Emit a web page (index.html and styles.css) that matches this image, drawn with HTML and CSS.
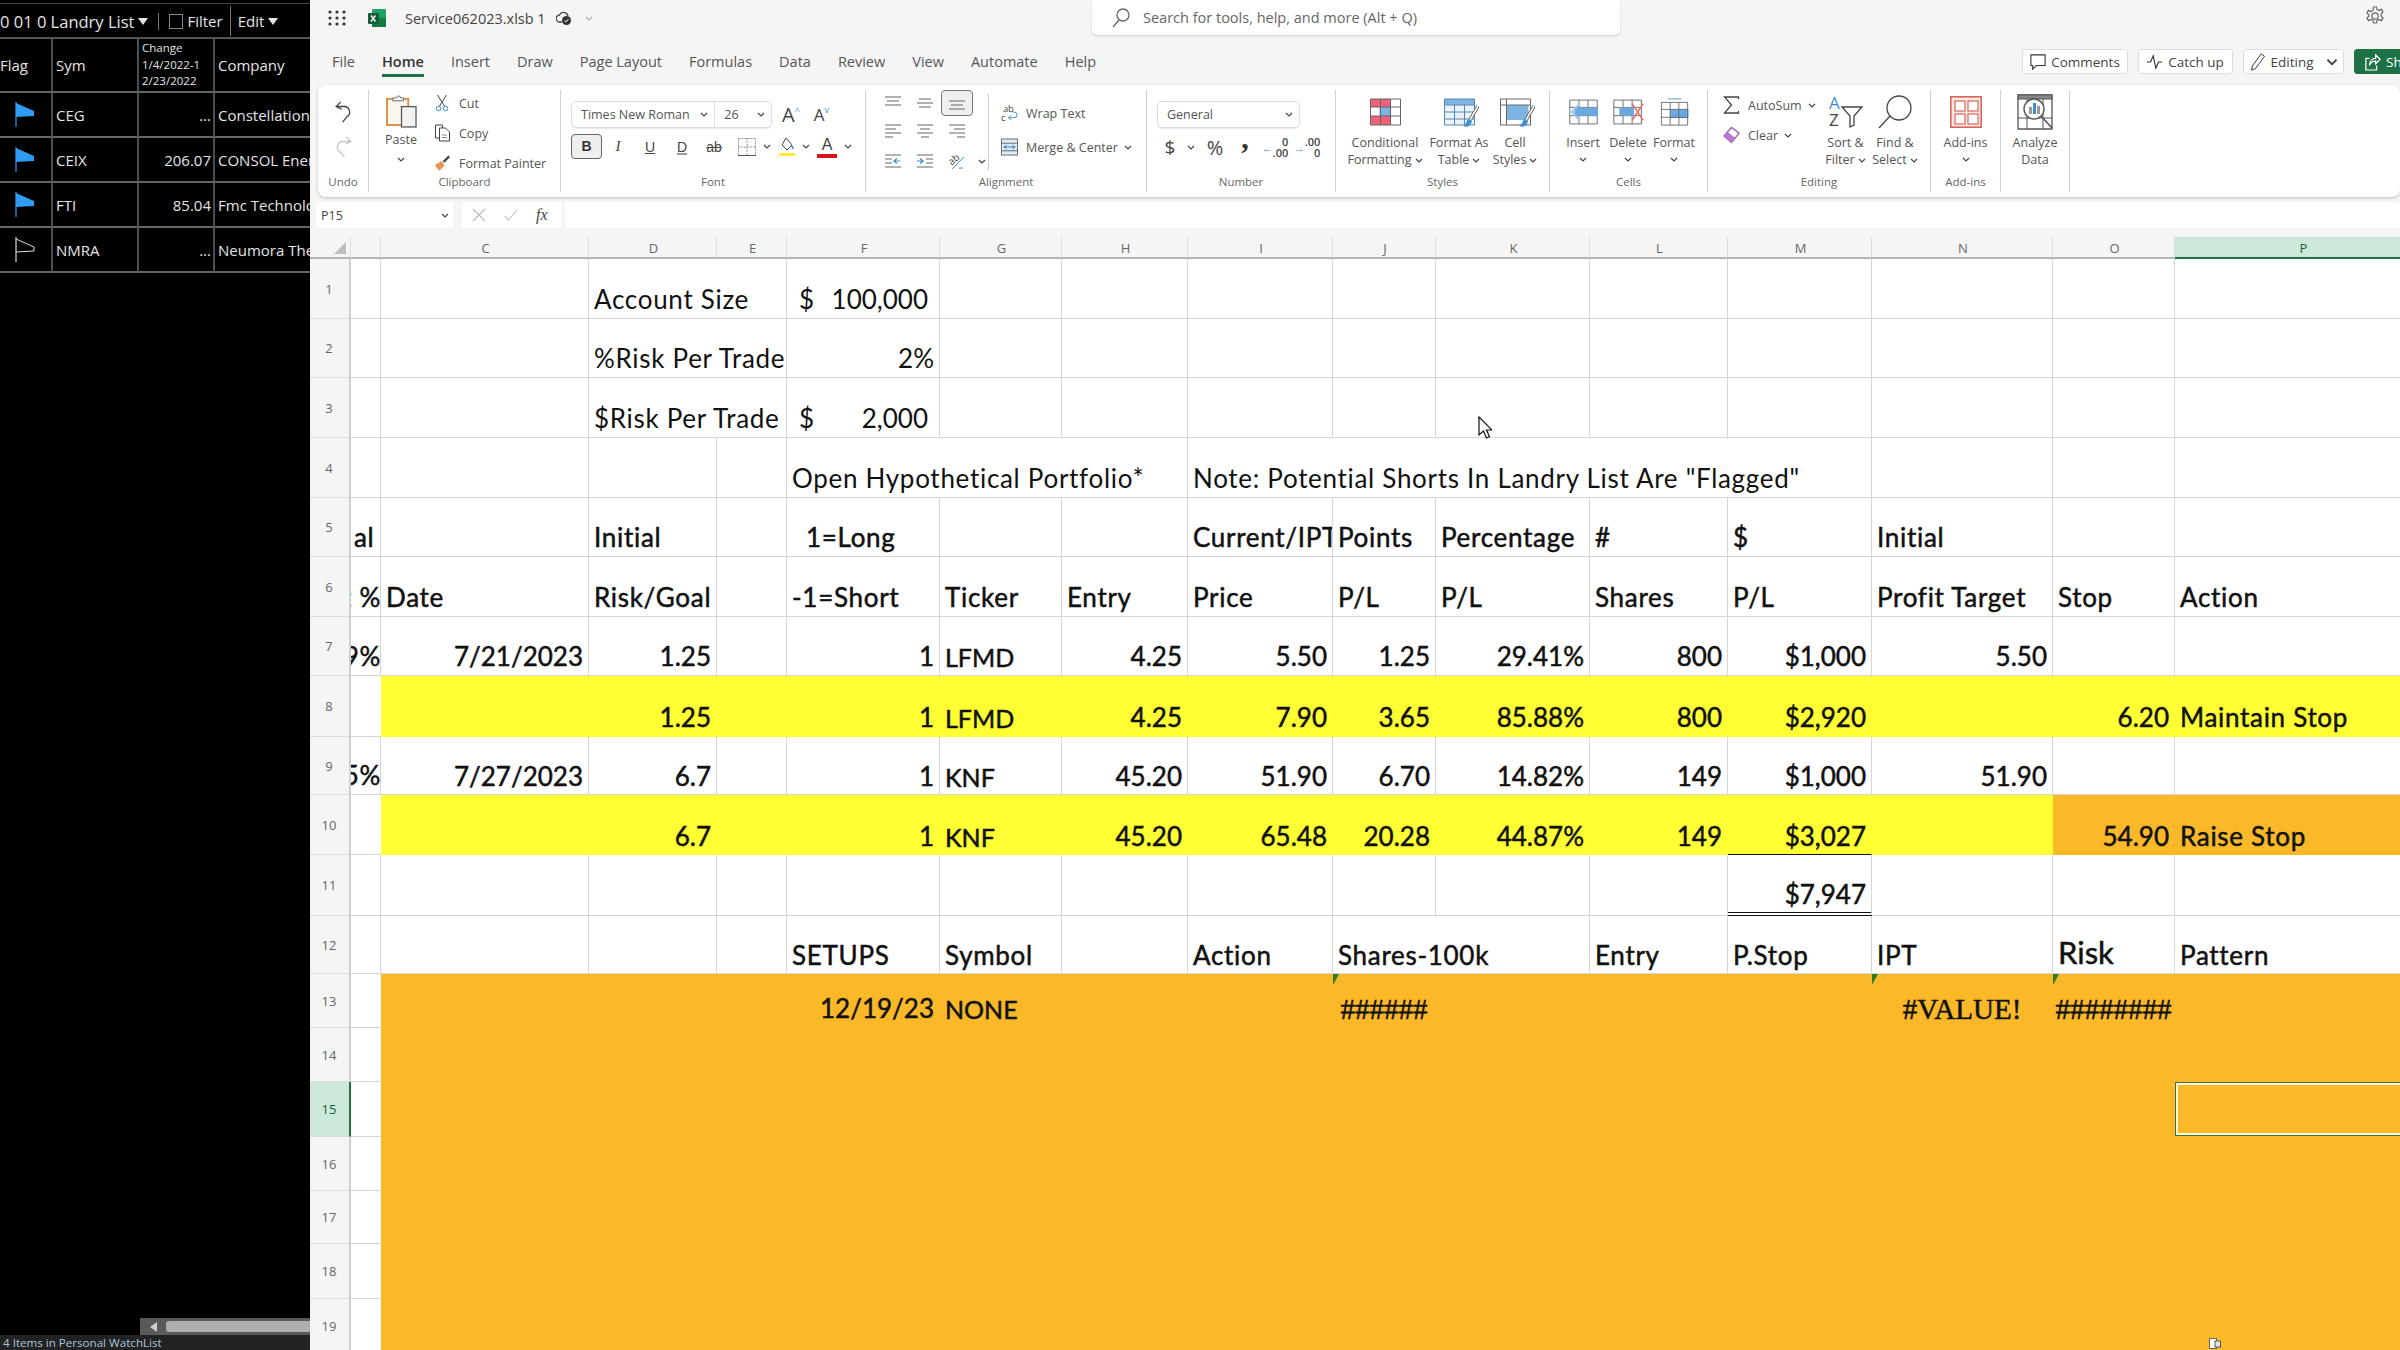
FILE: index.html
```html
<!DOCTYPE html>
<html>

<head>
    <title>Service062023.xlsb</title>
    <link rel="stylesheet" href="styles.css">
</head>

<body>
    <svg class="defs">
        <symbol id="chev" viewBox="0 0 8 5"><path d="M1 1l3 3 3-3" fill="none" stroke="#444" stroke-width="1.2"/></symbol>
        <symbol id="flag" viewBox="0 0 20 25"><path d="M1 0v25" stroke="currentColor" stroke-width="1.2"/><path d="M1 1l18 8v5L1 15z" fill="currentColor"/></symbol>
        <symbol id="flag-empty" viewBox="0 0 20 25"><path d="M1 0v25" stroke="#ddd" stroke-width="1.2"/><path d="M1 2l18 8v4L1 15" fill="none" stroke="#ddd"/></symbol>
        <symbol id="brush" viewBox="0 0 16 24"><path d="M15 1L7 15" stroke="#555" stroke-width="3.4"/><path d="M15 1L7 15" stroke="#fff" stroke-width="1.6"/><path d="M6 14c-3 1-2 5-6 7 4 2 8 0 9-5z" fill="#3f8fd2"/></symbol>
    </svg>

    <div class="watch">
        <div class="watch-bar">
            <span>0 01 0 Landry List</span><span class="tri"></span>
            <span class="bar-sep"></span><span class="box"></span><span class="dim">Filter</span>
            <span class="bar-sep small"></span><span class="dim">Edit</span><span class="tri"></span>
        </div>
        <div class="watch-list">
            <table class="watch-table">
                <colgroup><col class="w-flag"><col class="w-sym"><col class="w-chg"><col class="w-co"></colgroup>
                <tr class="watch-head">
                    <th>Flag</th>
                    <th>Sym</th>
                    <th class="chg-head">Change<br>1/4/2022-1<br>2/23/2022</th>
                    <th>Company</th>
                </tr>
                <tr><td><svg class="flag"><use href="#flag"/></svg></td><td>CEG</td><td class="num">...</td><td>Constellation Energy</td></tr>
                <tr><td><svg class="flag"><use href="#flag"/></svg></td><td>CEIX</td><td class="num">206.07</td><td>CONSOL Energy</td></tr>
                <tr><td><svg class="flag"><use href="#flag"/></svg></td><td>FTI</td><td class="num">85.04</td><td>Fmc Technologies</td></tr>
                <tr><td><svg class="flag"><use href="#flag-empty"/></svg></td><td>NMRA</td><td class="num">...</td><td>Neumora Therapeutics</td></tr>
            </table>
        </div>
        <div class="watch-scroll">
            <span class="scroll-left"></span>
            <span class="scroll-thumb"></span>
        </div>
        <div class="watch-status">4 Items in Personal WatchList</div>
    </div>

    <div class="excel">
        <div class="titlebar">
            <div class="title-left">
                <svg class="waffle" viewBox="0 0 18 16" fill="#333"><circle cx="2" cy="2" r="1.6"/><circle cx="9" cy="2" r="1.6"/><circle cx="16" cy="2" r="1.6"/><circle cx="2" cy="8" r="1.6"/><circle cx="9" cy="8" r="1.6"/><circle cx="16" cy="8" r="1.6"/><circle cx="2" cy="14" r="1.6"/><circle cx="9" cy="14" r="1.6"/><circle cx="16" cy="14" r="1.6"/></svg>
                <svg class="xl-logo" viewBox="0 0 18 18"><rect x="4" y="0" width="14" height="18" rx="1" fill="#21a366"/><rect x="4" y="9" width="14" height="9" fill="#107c41"/><rect x="0" y="4" width="11" height="11" rx="1" fill="#185c37"/><path d="M3 6.5l4.5 6M7.5 6.5L3 12.5" stroke="#fff" stroke-width="1.3"/></svg>
                <span class="doc-name">Service062023.xlsb 1</span>
                <svg class="sync" viewBox="0 0 16 16"><path d="M12 6a4.500 4.500 0 0 0-8.500-1A3.500 3.500 0 0 0 4 12h2" fill="none" stroke="#444" stroke-width="1.3"/><circle cx="10.500" cy="10.500" r="4.500" fill="#333"/><path d="M8.500 10.500l1.500 1.500 2.500-3" stroke="#fff" fill="none"/></svg>
                <svg class="chev pale"><use href="#chev"/></svg>
            </div>
            <div class="search">
                <svg class="search-icon" viewBox="0 0 18 20"><circle cx="11" cy="7" r="6" fill="none" stroke="#666" stroke-width="1.3"/><path d="M7 12l-6 7" stroke="#666" stroke-width="1.3"/></svg>
                <span>Search for tools, help, and more (Alt + Q)</span>
            </div>
            <svg class="gear" viewBox="0 0 20 20" fill="none" stroke="#666" stroke-width="1.2"><circle cx="10" cy="10" r="3.200"/><path d="M8.500 1h3l.5 2.600 2.200 1 2.300-1.200 1.500 2.600-1.800 1.800v2.400l1.800 1.800-1.500 2.600-2.300-1.200-2.200 1-.5 2.600h-3l-.5-2.600-2.200-1-2.300 1.200-1.500-2.600 1.800-1.800V8.800L2 7l1.500-2.600 2.300 1.200 2.200-1z"/></svg>
        </div>

        <div class="tabbar">
            <div class="tabs">
                <span>File</span>
                <span class="tab-on">Home</span>
                <span>Insert</span>
                <span>Draw</span>
                <span>Page Layout</span>
                <span>Formulas</span>
                <span>Data</span>
                <span>Review</span>
                <span>View</span>
                <span>Automate</span>
                <span>Help</span>
            </div>
            <div class="actions">
                <div class="action act-comments">
                    <svg class="act-icon" viewBox="0 0 18 18" fill="none" stroke="#333" stroke-width="1.2"><path d="M1 1h16v12H7l-4 4v-4H1z"/></svg>Comments
                </div>
                <div class="action act-catch">
                    <svg class="act-icon" viewBox="0 0 18 18" fill="none" stroke="#333" stroke-width="1.3"><path d="M0 9h4l3-7 3 14 3-7h4"/></svg>Catch up
                </div>
                <div class="action act-edit">
                    <svg class="act-icon" viewBox="0 0 18 22" fill="none" stroke="#333" stroke-width="1.2"><path d="M13 1l4 3L6 19l-5 2 1-5z"/></svg>Editing
                    <svg class="chev wide"><use href="#chev"/></svg>
                </div>
                <div class="action share">
                    <svg class="act-icon" viewBox="0 0 18 20" fill="none" stroke="#fff" stroke-width="1.4"><path d="M12 2l5 5-5 5V9C8 9 6 11 5 14c0-5 3-8 7-8zM13 14v5H1V6h4"/></svg>Share
                </div>
            </div>
        </div>

        <div class="ribbon">
            <div class="group g-undo">
                <div class="body undo-col">
                    <svg class="ico-undo" viewBox="0 0 18 24" fill="none" stroke="#444" stroke-width="1.4"><path d="M6 1L1 6l6 3M1 6h9a6 6 0 0 1 3 11l-5 6"/></svg>
                    <svg class="ico-undo" viewBox="0 0 18 24" fill="none" stroke="#c4c4c4" stroke-width="1.4"><path d="M12 1l5 5-6 3M17 6H8a6 6 0 0 0-3 11l5 6"/></svg>
                </div>
                <div class="label">Undo</div>
            </div>

            <div class="group g-clip">
                <div class="body">
                    <div class="paste">
                        <svg class="ico-paste" viewBox="0 0 32 36"><rect x="1" y="6" width="22" height="27" fill="#fdf6ee" stroke="#d9924a" stroke-width="2"/><path d="M7 8V5h4a2 2 0 0 1 4 0h3v3z" fill="#fff" stroke="#666"/><rect x="16" y="14" width="15" height="21" fill="#f2f2f2" stroke="#555" stroke-width="1.300"/></svg>
                        <span>Paste</span>
                        <svg class="chev"><use href="#chev"/></svg>
                    </div>
                    <div class="small-list">
                        <div class="small">
                            <svg class="ico-sm" viewBox="0 0 16 18" fill="none" stroke="#444"><path d="M3 1l7 11M12 1L5 12"/><circle cx="4" cy="14.500" r="2.300" stroke="#3f8fd2"/><circle cx="11" cy="14.500" r="2.300" stroke="#3f8fd2"/></svg>Cut
                        </div>
                        <div class="small">
                            <svg class="ico-sm" viewBox="0 0 16 18" fill="#fff" stroke="#444"><path d="M1 1h7v13H1z"/><path d="M5 4h6l4 4v9H5z"/><path d="M7.500 11h5M7.500 13.500h5" stroke="#888"/></svg>Copy
                        </div>
                        <div class="small">
                            <svg class="ico-sm" viewBox="0 0 18 18"><path d="M1 11l7-4 3 5-5 5c-1 0-4-4-5-6z" fill="#e9964c"/><path d="M10 8l6-6" stroke="#444" stroke-width="2.400"/></svg>Format Painter
                        </div>
                    </div>
                </div>
                <div class="label">Clipboard</div>
            </div>

            <div class="group g-font">
                <div class="body font-col">
                    <div class="font-top">
                        <div class="combo font-combo">
                            <span class="combo-name">Times New Roman<svg class="chev"><use href="#chev"/></svg></span>
                            <span class="combo-size">26<svg class="chev"><use href="#chev"/></svg></span>
                        </div>
                        <span class="grow">A<sup>^</sup></span>
                        <span class="shrink">A<sup>v</sup></span>
                    </div>
                    <div class="font-row">
                        <span class="tool-b">B</span>
                        <span class="tool t-i">I</span>
                        <span class="tool t-u">U</span>
                        <span class="tool t-d">D</span>
                        <span class="tool t-s">ab</span>
                        <svg class="ico-border" viewBox="0 0 18 18" fill="none" stroke="#999"><rect x=".5" y=".5" width="17" height="17" stroke-dasharray="2 1"/><path d="M9 0v18M0 9h18" stroke-dasharray="2 1"/><path d="M0 17.500h18" stroke="#555" stroke-dasharray="none"/></svg>
                        <svg class="chev"><use href="#chev"/></svg>
                        <svg class="ico-fill" viewBox="0 0 16 20"><path d="M7 1l6 7-5 5-5-5z" fill="#fff" stroke="#444"/><path d="M12 8c2 2 2 3 2 4" stroke="#3f8fd2" stroke-width="1.500"/><rect x="0" y="16" width="16" height="3" fill="#ffe93b"/></svg>
                        <svg class="chev"><use href="#chev"/></svg>
                        <span class="tool t-color">A</span>
                        <svg class="chev"><use href="#chev"/></svg>
                    </div>
                </div>
                <div class="label">Font</div>
            </div>

            <div class="group g-align">
                <div class="body">
                    <div class="align-grid">
                        <svg class="ico-lines" viewBox="0 0 16 14"><path d="M0 1h16M2 5h12M0 9h16"/></svg>
                        <svg class="ico-lines" viewBox="0 0 16 14"><path d="M2 3h12M0 7h16M2 11h12"/></svg>
                        <span class="align-on"><svg class="ico-lines" viewBox="0 0 16 14"><path d="M0 5h16M2 9h12M0 13h16"/></svg></span>
                        <span></span>
                        <svg class="ico-lines" viewBox="0 0 16 14"><path d="M0 1h16M0 5h11M0 9h16M0 13h8"/></svg>
                        <svg class="ico-lines" viewBox="0 0 16 14"><path d="M0 1h16M3 5h10M0 9h16M4 13h8"/></svg>
                        <svg class="ico-lines" viewBox="0 0 16 14"><path d="M0 1h16M5 5h11M0 9h16M8 13h8"/></svg>
                        <span></span>
                        <svg class="ico-lines" viewBox="0 0 16 14"><path d="M0 1h16M0 5h7M0 9h7M0 13h16"/><path class="blue" d="M15 7H9l3-2.500M9 7l3 2.500"/></svg>
                        <svg class="ico-lines" viewBox="0 0 16 14"><path d="M0 1h16M9 5h7M9 9h7M0 13h16"/><path class="blue" d="M0 7h6L3 4.500M6 7L3 9.500"/></svg>
                        <svg class="ico-orient" viewBox="0 0 18 18"><text x="1" y="11" transform="rotate(-40 6 9)">ab</text><path d="M4 17L16 5M11 16h4" stroke="#3f8fd2" fill="none"/></svg>
                        <svg class="chev"><use href="#chev"/></svg>
                    </div>
                    <span class="vsep"></span>
                    <div class="wrap-list">
                        <div class="small">
                            <svg class="ico-wrap" viewBox="0 0 18 18"><text x="2" y="8">ab</text><text x="0" y="17">c</text><path d="M8 14h6a3 3 0 0 0 0-6h-2M8 14l3-2.500M8 14l3 2.500" fill="none" stroke="#3f8fd2"/></svg>Wrap Text
                        </div>
                        <div class="small">
                            <svg class="ico-wrap" viewBox="0 0 18 18" fill="none" stroke="#666"><rect x=".5" y=".5" width="17" height="17" fill="#ddecf8"/><path d="M0 5h18M0 13h18"/><path d="M3 9h12M3 9l3-2M3 9l3 2M15 9l-3-2M15 9l-3 2" stroke="#2b7cc4"/></svg>Merge &amp; Center
                            <svg class="chev"><use href="#chev"/></svg>
                        </div>
                    </div>
                </div>
                <div class="label">Alignment</div>
            </div>

            <div class="group g-num">
                <div class="body num-col">
                    <div class="combo num-combo">General<svg class="chev"><use href="#chev"/></svg></div>
                    <div class="num-row">
                        <span class="n-dollar">$</span>
                        <svg class="chev n-chev"><use href="#chev"/></svg>
                        <span class="n-pct">%</span>
                        <span class="n-comma">,</span>
                        <span class="n-dec"><i>←</i><b>0<br>.00</b></span>
                        <span class="n-dec"><i>→</i><b>.00<br>0</b></span>
                    </div>
                </div>
                <div class="label">Number</div>
            </div>

            <div class="group g-styles">
                <div class="body">
                    <div class="big b-cf">
                        <div class="big-icon">
                            <svg class="ico-32" viewBox="0 0 32 28"><rect x="1" y="1" width="30" height="26" fill="#fff"/><rect x="1" y="1" width="20" height="8" fill="#f0607a"/><rect x="10" y="9" width="11" height="9" fill="#7eb4e2"/><rect x="1" y="18" width="20" height="9" fill="#f0607a"/><path d="M1 1h30v26H1zM11 1v26M21 1v26M1 9h30M1 18h30" fill="none" stroke="#666"/></svg>
                        </div>
                        <span>Conditional</span>
                        <span>Formatting<svg class="chev"><use href="#chev"/></svg></span>
                    </div>
                    <div class="big b-fat">
                        <div class="big-icon">
                            <span class="brushed">
                                <svg class="ico-32" viewBox="0 0 32 28"><rect x="1" y="1" width="30" height="6" fill="#7eb4e2"/><rect x="1" y="7" width="30" height="20" fill="#eaf2fa"/><path d="M1 1h30v26H1zM11 7v20M21 7v20M1 7h30M1 14h30M1 21h30" fill="none" stroke="#5a86ad"/></svg>
                                <svg class="over-brush"><use href="#brush"/></svg>
                            </span>
                        </div>
                        <span>Format As</span>
                        <span>Table<svg class="chev"><use href="#chev"/></svg></span>
                    </div>
                    <div class="big b-cs">
                        <div class="big-icon">
                            <span class="brushed">
                                <svg class="ico-32" viewBox="0 0 32 28"><rect x="7" y="7" width="22" height="15" fill="#7eb4e2"/><path d="M1 1h30v26H1zM7 1v26M1 7h30" fill="none" stroke="#666"/></svg>
                                <svg class="over-brush"><use href="#brush"/></svg>
                            </span>
                        </div>
                        <span>Cell</span>
                        <span>Styles<svg class="chev"><use href="#chev"/></svg></span>
                    </div>
                </div>
                <div class="label">Styles</div>
            </div>

            <div class="group g-cells">
                <div class="body">
                    <div class="big b-ins">
                        <div class="big-icon">
                            <svg class="ico-32" viewBox="0 0 36 28"><path d="M3 1h30v26H3zM13 1v26M23 1v26M3 9h30M3 18h30" fill="none" stroke="#666"/><rect x="8" y="9" width="26" height="9" fill="#6aaae0"/><path d="M14 5l-9 9 9 9" fill="none" stroke="#9cc8ee" stroke-width="2"/></svg>
                        </div>
                        <span>Insert</span>
                        <svg class="chev"><use href="#chev"/></svg>
                    </div>
                    <div class="big b-del">
                        <div class="big-icon">
                            <svg class="ico-32" viewBox="0 0 36 28"><path d="M2 1h30v26H2zM12 1v26M22 1v26M2 9h30M2 18h30" fill="none" stroke="#666"/><rect x="8" y="9" width="16" height="9" fill="#6aaae0"/><path d="M22 5l12 18M34 5L22 23" stroke="#ef6a6a" stroke-width="1.500"/></svg>
                        </div>
                        <span>Delete</span>
                        <svg class="chev"><use href="#chev"/></svg>
                    </div>
                    <div class="big b-fmt">
                        <div class="big-icon">
                            <svg class="ico-32" viewBox="0 0 32 32"><path d="M8 1h16" stroke="#4d8fc7"/><rect x="11" y="13" width="21" height="10" fill="#6aaae0"/><path d="M1 5h30v26H1zM11 5v26M21 5v26M1 13h30M1 22h30" fill="none" stroke="#666"/></svg>
                        </div>
                        <span>Format</span>
                        <svg class="chev"><use href="#chev"/></svg>
                    </div>
                </div>
                <div class="label">Cells</div>
            </div>

            <div class="group g-edit">
                <div class="body">
                    <div class="edit-list">
                        <div class="small">
                            <svg class="ico-sum" viewBox="0 0 16 18"><path d="M15 3V1H1l7 8-7 8h14v-2" fill="none" stroke="#444" stroke-width="1.300"/></svg>AutoSum
                            <svg class="chev"><use href="#chev"/></svg>
                        </div>
                        <div class="small">
                            <svg class="ico-sum" viewBox="0 0 18 18"><path d="M1 10l8-9 8 6-8 10z" fill="#fff" stroke="#9c5bb5" stroke-width="1.400"/><path d="M1 10l4-4 8 6-4 5z" fill="#b77bcb"/></svg>Clear
                            <svg class="chev"><use href="#chev"/></svg>
                        </div>
                    </div>
                    <div class="big b-sort">
                        <div class="big-icon">
                            <svg class="ico-sort" viewBox="0 0 34 34"><text class="az-a" x="0" y="14">A</text><text class="az-z" x="0" y="31">Z</text><path d="M13 12h20l-8 9v9l-4 2V21z" fill="none" stroke="#444" stroke-width="1.300"/></svg>
                        </div>
                        <span>Sort &amp;</span>
                        <span>Filter<svg class="chev"><use href="#chev"/></svg></span>
                    </div>
                    <div class="big b-find">
                        <div class="big-icon">
                            <svg class="ico-sort" viewBox="0 0 34 34" fill="none" stroke="#444" stroke-width="1.300"><circle cx="21" cy="13" r="12"/><path d="M12 21L1 33"/></svg>
                        </div>
                        <span>Find &amp;</span>
                        <span>Select<svg class="chev"><use href="#chev"/></svg></span>
                    </div>
                </div>
                <div class="label">Editing</div>
            </div>

            <div class="group g-addin">
                <div class="body">
                    <div class="big b-full">
                        <div class="big-icon">
                            <svg class="ico-addin" viewBox="0 0 32 32" fill="#fff" stroke="#d9655a" stroke-width="1.200"><rect x=".8" y=".8" width="30.400" height="30.400" fill="#fbe9e7" stroke-width="1.600"/><rect x="5" y="5" width="10" height="10"/><rect x="18" y="5" width="10" height="10"/><rect x="5" y="18" width="10" height="10"/><rect x="18" y="18" width="10" height="10"/></svg>
                        </div>
                        <span>Add-ins</span>
                        <svg class="chev"><use href="#chev"/></svg>
                    </div>
                </div>
                <div class="label">Add-ins</div>
            </div>

            <div class="group g-analyze">
                <div class="body">
                    <div class="big b-full">
                        <div class="big-icon">
                            <svg class="ico-analyze" viewBox="0 0 36 36" fill="none" stroke="#555"><path d="M1 1h34v34H1z" stroke-width="1.300"/><rect x="1" y="1" width="34" height="4" fill="#888"/><path d="M1 24h34M10 5v30M26 5v30"/><circle cx="17" cy="15" r="10" fill="#fff" stroke-width="1.400"/><rect x="12" y="13" width="3" height="7" fill="#999" stroke="none"/><rect x="16" y="9" width="3" height="11" fill="#3f8fd2" stroke="none"/><rect x="20" y="12" width="3" height="8" fill="#999" stroke="none"/><path d="M24 22l11 12" stroke-width="1.600"/></svg>
                        </div>
                        <span>Analyze</span>
                        <span>Data</span>
                    </div>
                </div>
            </div>
        </div>

        <div class="formula">
            <div class="name-box">P15<svg class="chev"><use href="#chev"/></svg></div>
            <div class="fx-box">
                <svg class="fx-mark" viewBox="0 0 14 14"><path d="M1 1l12 12M13 1L1 13" stroke="#bbb" stroke-width="1.200"/></svg>
                <svg class="fx-mark" viewBox="0 0 16 14"><path d="M1 8l4 5L15 1" fill="none" stroke="#bbb" stroke-width="1.200"/></svg>
                <span class="fx">fx</span>
            </div>
            <div class="fx-input"></div>
        </div>

        <table class="sheet">
            <colgroup>
                <col class="c-rh"><col class="c-b"><col class="c-c"><col class="c-d"><col class="c-e"><col class="c-f"><col class="c-g"><col class="c-h">
                <col class="c-i"><col class="c-j"><col class="c-k"><col class="c-l"><col class="c-m"><col class="c-n"><col class="c-o"><col class="c-p">
            </colgroup>
            <tr class="cols">
                <th class="corner"><span class="corner-tri"></span></th>
                <th></th><th>C</th><th>D</th><th>E</th><th>F</th><th>G</th><th>H</th><th>I</th><th>J</th><th>K</th><th>L</th><th>M</th><th>N</th><th>O</th><th class="col-on">P</th>
            </tr>
            <tr class="h60 plain">
                <th class="rh">1</th><td></td><td></td><td colspan="2">Account Size</td>
                <td><div class="acct"><span>$</span><span>100,000</span></div></td>
                <td></td><td></td><td></td><td></td><td></td><td></td><td></td><td></td><td></td><td></td>
            </tr>
            <tr class="h59 plain">
                <th class="rh">2</th><td></td><td></td><td colspan="2">%Risk Per Trade</td>
                <td class="r">2%</td>
                <td></td><td></td><td></td><td></td><td></td><td></td><td></td><td></td><td></td><td></td>
            </tr>
            <tr class="h60 plain">
                <th class="rh">3</th><td></td><td></td><td colspan="2">$Risk Per Trade</td>
                <td><div class="acct"><span>$</span><span>2,000</span></div></td>
                <td></td><td></td><td></td><td></td><td></td><td></td><td></td><td></td><td></td><td></td>
            </tr>
            <tr class="h60 plain">
                <th class="rh">4</th><td></td><td></td><td></td><td></td>
                <td colspan="3">Open Hypothetical Portfolio*</td>
                <td colspan="5">Note: Potential Shorts In Landry List Are "Flagged"</td>
                <td></td><td></td><td></td>
            </tr>
            <tr class="h59 strong">
                <th class="rh">5</th><td class="cut">al</td><td></td><td>Initial</td><td></td><td class="indent">1=Long</td><td></td><td></td><td>Current/IPT</td><td>Points</td><td>Percentage</td><td>#</td><td>$</td><td>Initial</td><td></td><td></td>
            </tr>
            <tr class="h60 strong">
                <th class="rh">6</th><td class="clip"><span>t %</span></td><td>Date</td><td>Risk/Goal</td><td></td><td>-1=Short</td><td>Ticker</td><td>Entry</td><td>Price</td><td>P/L</td><td>P/L</td><td>Shares</td><td>P/L</td><td>Profit Target</td><td>Stop</td><td>Action</td>
            </tr>
            <tr class="h59 strong">
                <th class="rh">7</th><td class="clip"><span>19%</span></td><td class="r">7/21/2023</td><td class="r">1.25</td><td></td><td class="r">1</td><td class="tk">LFMD</td><td class="r">4.25</td><td class="r">5.50</td><td class="r">1.25</td><td class="r">29.41%</td><td class="r">800</td><td class="r">$1,000</td><td class="r">5.50</td><td></td><td></td>
            </tr>
            <tr class="h61 strong yellow">
                <th class="rh">8</th><td class="white"></td><td></td><td class="r">1.25</td><td></td><td class="r">1</td><td class="tk">LFMD</td><td class="r">4.25</td><td class="r">7.90</td><td class="r">3.65</td><td class="r">85.88%</td><td class="r">800</td><td class="r">$2,920</td><td></td><td class="r">6.20</td><td>Maintain Stop</td>
            </tr>
            <tr class="h58 strong low">
                <th class="rh">9</th><td class="clip"><span>15%</span></td><td class="r">7/27/2023</td><td class="r">6.7</td><td></td><td class="r">1</td><td class="tk">KNF</td><td class="r">45.20</td><td class="r">51.90</td><td class="r">6.70</td><td class="r">14.82%</td><td class="r">149</td><td class="r">$1,000</td><td class="r">51.90</td><td></td><td></td>
            </tr>
            <tr class="h60 strong yellow low">
                <th class="rh">10</th><td class="white"></td><td></td><td class="r">6.7</td><td></td><td class="r">1</td><td class="tk">KNF</td><td class="r">45.20</td><td class="r">65.48</td><td class="r">20.28</td><td class="r">44.87%</td><td class="r">149</td><td class="r line-under">$3,027</td><td></td><td class="r amber">54.90</td><td class="amber">Raise Stop</td>
            </tr>
            <tr class="h61 strong">
                <th class="rh">11</th><td></td><td></td><td></td><td></td><td></td><td></td><td></td><td></td><td></td><td></td><td></td><td class="r total">$7,947</td><td></td><td></td><td></td>
            </tr>
            <tr class="h58 strong low">
                <th class="rh">12</th><td></td><td></td><td></td><td></td><td>SETUPS</td><td>Symbol</td><td></td><td>Action</td><td colspan="2">Shares-100k</td><td>Entry</td><td>P.Stop</td><td>IPT</td><td class="risk">Risk</td><td>Pattern</td>
            </tr>
            <tr class="h54 strong fill">
                <th class="rh">13</th><td class="white"></td><td></td><td></td><td></td><td class="r">12/19/23</td><td class="tk">NONE</td><td></td><td></td><td class="err note c">######</td><td></td><td></td><td></td><td class="err note c">#VALUE!</td><td class="err note c">########</td><td></td>
            </tr>
            <tr class="h54 fill"><th class="rh">14</th><td class="white"></td><td colspan="14"></td></tr>
            <tr class="h55 fill"><th class="rh row-on">15</th><td class="white"></td><td colspan="13"></td><td class="selected"></td></tr>
            <tr class="h54 fill"><th class="rh">16</th><td class="white"></td><td colspan="14"></td></tr>
            <tr class="h53 fill"><th class="rh">17</th><td class="white"></td><td colspan="14"></td></tr>
            <tr class="h55 fill"><th class="rh">18</th><td class="white"></td><td colspan="14"></td></tr>
            <tr class="h54 fill"><th class="rh">19</th><td class="white"></td><td colspan="14"></td></tr>
        </table>

        <svg class="paste-tag" viewBox="0 0 12 12"><rect x=".5" y="1.500" width="7" height="10" fill="#fff" stroke="#666"/><rect x="6" y="4" width="5.500" height="6" fill="#dfe8f2" stroke="#555"/></svg>
        <svg class="pointer" viewBox="0 0 14 24"><path d="M1 1v18l4.500-4 3 7 3-1.300-3-6.700H14z" fill="#fff" stroke="#111" stroke-width="1.200"/></svg>
    </div>
</body>

</html>
```

FILE: styles.css
```css
* {
    box-sizing: border-box;
    margin: 0;
}

html,
body {
    height: 1350px;
    overflow: hidden;
}

body {
    display: flex;
    width: 2400px;
    font-family: "Open Sans", sans-serif;
    background: #000;
}

.defs {
    display: none;
}

.chev {
    width: 8px;
    height: 5px;
    flex: none;
}

.chev.pale {
    opacity: .4;
}

.chev.wide {
    width: 12px;
    height: 8px;
    margin-left: 7px;
}

/* watch list on the left */
.watch {
    width: 310px;
    flex: none;
    display: flex;
    flex-direction: column;
    overflow: hidden;
    background: #000;
    color: #e4e4e4;
}

.watch-bar {
    height: 34px;
    display: flex;
    align-items: center;
    gap: 4px;
    margin-top: 3px;
    padding-top: 1px;
    border-top: 1px solid #444;
    font-size: 16.500px;
    white-space: nowrap;
}

.tri {
    border-left: 5px solid transparent;
    border-right: 5px solid transparent;
    border-top: 7px solid #e4e4e4;
}

.bar-sep {
    width: 1px;
    height: 17px;
    background: #777;
    margin: 0 6px;
}

.bar-sep.small {
    margin: 0 3px;
}

.box {
    width: 14px;
    height: 15px;
    border: 1px solid #888;
}

.dim {
    font-size: 15px;
}

.watch-list {
    flex: 1;
}

.watch-table {
    table-layout: fixed;
    width: 310px;
    border-collapse: separate;
    border-spacing: 0;
    font-size: 15px;
    border-top: 2px solid #555;
}

.w-flag {
    width: 53px;
}

.w-sym {
    width: 86px;
}

.w-chg {
    width: 76px;
}

.w-co {
    width: 95px;
}

.watch-table th,
.watch-table td {
    padding: 0 2px 0 3px;
    text-align: left;
    font-weight: 400;
    overflow: hidden;
    white-space: nowrap;
    border-right: 2px solid #4d4d4d;
    border-bottom: 2px solid #666;
}

.watch-table tr > :last-child {
    border-right: 0;
}

.watch-table th:first-child {
    padding-left: 0;
}

.watch-table tr {
    height: 45px;
}

.watch-table .watch-head {
    height: 54px;
}

.watch-table .chg-head {
    font-size: 11.500px;
    line-height: 16.500px;
}

.watch-table .num {
    text-align: right;
}

.flag {
    display: block;
    width: 20px;
    height: 25px;
    margin-left: 12px;
    color: #2f9bf3;
}

.watch-scroll {
    height: 17px;
    width: 170px;
    margin-left: auto;
    display: flex;
    align-items: center;
    background: #5a5a5a;
}

.scroll-left {
    width: 0;
    height: 0;
    margin: 0 9px 0 10px;
    border-top: 5px solid transparent;
    border-bottom: 5px solid transparent;
    border-right: 7px solid #ccc;
}

.scroll-thumb {
    flex: 1;
    height: 11px;
    border-radius: 3px 0 0 3px;
    background: #aeaeae;
}

.watch-status {
    height: 15px;
    padding-left: 3px;
    background: #222;
    color: #a9c4dc;
    font-size: 11.600px;
    line-height: 16px;
    white-space: nowrap;
}

/* excel */
.excel {
    position: relative;
    width: 2090px;
    flex: none;
    overflow: hidden;
    background: #f5f5f5;
    color: #444;
}

.titlebar {
    height: 37px;
    display: flex;
}

.title-left {
    width: 782px;
    display: flex;
    align-items: center;
    padding-left: 18px;
    padding-bottom: 1px;
}

.waffle {
    width: 18px;
    height: 16px;
}

.xl-logo {
    width: 18px;
    height: 18px;
    margin-left: 22px;
}

.doc-name {
    margin-left: 19px;
    font-size: 14.500px;
    color: #444;
}

.sync {
    width: 16px;
    height: 16px;
    margin: 0 13px 0 10px;
}

.search {
    width: 528px;
    height: 35px;
    display: flex;
    align-items: center;
    padding-left: 20px;
    background: #fff;
    border-radius: 0 0 5px 5px;
    box-shadow: 0 1px 2px #ccc;
    font-size: 14.500px;
    color: #666;
}

.search-icon {
    width: 18px;
    height: 20px;
    margin-right: 13px;
}

.gear {
    width: 20px;
    height: 20px;
    margin: 6px 0 0 745px;
}

.tabbar {
    height: 48px;
    display: flex;
}

.tabs {
    width: 1712px;
    flex: none;
    display: flex;
    gap: 27px;
    padding: 16px 0 0 22px;
    font-size: 14.500px;
    color: #555;
}

.tabs span {
    height: 24px;
    line-height: 18px;
}

.tabs .tab-on {
    font-weight: 600;
    color: #333;
    border-bottom: 3px solid #217346;
}

.actions {
    display: flex;
    gap: 10px;
    padding-top: 12px;
    font-size: 13.500px;
    color: #444;
}

.action {
    height: 25px;
    flex: none;
    display: flex;
    align-items: center;
    justify-content: center;
    gap: 5px;
    background: #fff;
    border: 1px solid #ddd;
    border-radius: 3px;
    white-space: nowrap;
}

.act-comments {
    width: 106px;
}

.act-catch {
    width: 95px;
}

.act-edit {
    width: 101px;
}

.action.share {
    width: 90px;
    justify-content: flex-start;
    padding-left: 10px;
    background: #1e7145;
    border-color: #1e7145;
    color: #fff;
}

.act-icon {
    width: 16px;
    height: 18px;
}

/* ribbon */
.ribbon {
    height: 112px;
    margin-left: 8px;
    display: flex;
    padding: 5px 0;
    background: #fff;
    border-radius: 8px;
    box-shadow: 0 1px 3px #bbb;
    font-size: 12.500px;
    color: #555;
}

.group {
    height: 102px;
    flex: none;
    border-right: 1px solid #d0d0d0;
    white-space: nowrap;
}

.body {
    height: 80px;
    display: flex;
}

.label {
    height: 22px;
    padding-top: 4px;
    text-align: center;
    font-size: 11.500px;
    color: #666;
}

.g-undo {
    width: 51px;
}

.g-clip {
    width: 192px;
}

.g-font {
    width: 305px;
}

.g-align {
    width: 281px;
}

.g-num {
    width: 189px;
}

.g-styles {
    width: 214px;
}

.g-cells {
    width: 158px;
}

.g-edit {
    width: 223px;
}

.g-addin {
    width: 70px;
}

.g-analyze {
    width: 69px;
}

.undo-col {
    flex-direction: column;
    align-items: center;
    gap: 13px;
    padding-top: 11px;
}

.ico-undo {
    width: 17px;
    height: 22px;
}

.paste {
    width: 64px;
    display: flex;
    flex-direction: column;
    align-items: center;
}

.ico-paste {
    width: 31px;
    height: 35px;
    margin: 3px 0 3px;
}

.paste .chev {
    margin-top: 9px;
}

.small-list {
    margin: -2px 0 0 1px;
}

.small {
    height: 30px;
    display: flex;
    align-items: center;
}

.small .chev {
    margin-left: 6px;
}

.ico-sm {
    width: 17px;
    height: 18px;
    margin-right: 8px;
}

.font-col {
    flex-direction: column;
    padding: 11px 0 0 10px;
}

.font-top {
    display: flex;
    align-items: center;
    height: 27px;
}

.combo {
    height: 27px;
    display: flex;
    align-items: center;
    border: 1px solid #dcdcdc;
    border-radius: 5px;
    box-shadow: 0 1px 1px #e8e8e8;
}

.font-combo {
    width: 201px;
}

.combo-name {
    width: 144px;
    height: 25px;
    display: flex;
    align-items: center;
    justify-content: space-between;
    padding: 0 6px 0 9px;
    border-right: 1px solid #dcdcdc;
}

.combo-size {
    width: 56px;
    display: flex;
    align-items: center;
    justify-content: space-between;
    padding: 0 6px 0 9px;
}

.grow {
    margin-left: 10px;
    font-size: 20px;
    color: #444;
}

.shrink {
    margin-left: 14px;
    font-size: 17px;
    color: #444;
}

.grow sup,
.shrink sup {
    font-size: 9px;
    color: #3f8fd2;
    vertical-align: 8px;
}

.font-row {
    display: flex;
    align-items: center;
    height: 25px;
    margin-top: 6px;
}

.tool-b {
    width: 31px;
    height: 25px;
    text-align: center;
    line-height: 23px;
    font-family: "Liberation Sans", sans-serif;
    font-size: 14px;
    font-weight: 700;
    background: #efefef;
    border: 1px solid #666;
    border-radius: 4px;
    color: #333;
}

.tool {
    width: 32px;
    text-align: center;
    font-size: 14px;
    font-family: "Liberation Sans", sans-serif;
    color: #444;
}

.t-i {
    font-style: italic;
    font-family: "Liberation Serif", serif;
    font-size: 15px;
}

.t-u {
    text-decoration: underline;
}

.t-d {
    text-decoration: underline;
    text-decoration-color: #999;
    text-decoration-thickness: 2px;
}

.t-s {
    text-decoration: line-through;
}

.ico-border {
    width: 18px;
    height: 18px;
    margin-left: 8px;
}

.font-row .chev {
    margin: 0 6px 0 7px;
}

.ico-fill {
    width: 16px;
    height: 20px;
    margin-left: 2px;
}

.t-color {
    width: 20px;
    height: 22px;
    margin-left: 1px;
    line-height: 18px;
    font-size: 16px;
    border-bottom: 4px solid #d8131b;
}

.align-grid {
    display: grid;
    grid-template-columns: 32px 32px 32px 18px;
    grid-template-rows: 26px 30px 30px;
    align-items: center;
    justify-items: center;
    margin-left: 11px;
}

.ico-lines {
    width: 16px;
    height: 14px;
    fill: none;
    stroke: #666;
    stroke-width: 1.200;
}

.ico-lines .blue {
    stroke: #3f8fd2;
}

.align-on {
    width: 32px;
    height: 26px;
    display: flex;
    align-items: center;
    justify-content: center;
    background: #efefef;
    border: 1px solid #777;
    border-radius: 4px;
}

.ico-orient {
    width: 18px;
    height: 18px;
    font-size: 10px;
    fill: #444;
}

.vsep {
    width: 1px;
    height: 76px;
    margin: 4px 0 0 -3px;
    background: #d0d0d0;
}

.wrap-list {
    margin: 6px 0 0 12px;
}

.wrap-list .small {
    height: 34px;
}

.ico-wrap {
    width: 17px;
    height: 18px;
    margin-right: 8px;
    font-size: 10px;
    fill: #444;
}

.num-col {
    flex-direction: column;
    padding: 11px 0 0 10px;
}

.num-combo {
    width: 143px;
    justify-content: space-between;
    padding: 0 6px 0 9px;
}

.num-row {
    display: flex;
    align-items: center;
    height: 26px;
    margin-top: 6px;
    color: #444;
}

.n-dollar {
    width: 26px;
    text-align: center;
    font-size: 19px;
}

.n-chev {
    margin: 0 4px;
}

.n-pct {
    width: 32px;
    text-align: center;
    font-size: 20px;
}

.n-comma {
    width: 28px;
    height: 26px;
    text-align: center;
    font-family: "Liberation Serif", serif;
    font-size: 30px;
    font-weight: 700;
    line-height: 8px;
    color: #333;
}

.n-dec {
    width: 32px;
    display: flex;
    align-items: center;
    justify-content: center;
    font-size: 11px;
    line-height: 11px;
}

.n-dec i {
    font-style: normal;
    color: #3f8fd2;
    font-size: 11px;
}

.n-dec b {
    font-weight: 600;
    text-align: right;
}

.big {
    display: flex;
    flex-direction: column;
    align-items: center;
    line-height: 17px;
    flex: none;
}

.big > .chev {
    margin-top: 6px;
}

.big span .chev {
    margin-left: 3px;
    vertical-align: 1px;
}

.big-icon {
    height: 44px;
    display: flex;
    align-items: center;
    justify-content: center;
}

.ico-32 {
    width: 33px;
    height: 28px;
    display: block;
}

.brushed {
    position: relative;
    display: block;
}

.over-brush {
    position: absolute;
    right: -3px;
    top: 7px;
    width: 16px;
    height: 24px;
}

.b-cf {
    width: 86px;
    margin-left: 6px;
}

.b-fat {
    width: 62px;
}

.b-cs {
    width: 50px;
}

.b-ins {
    width: 46px;
    margin-left: 10px;
}

.b-del {
    width: 44px;
}

.b-fmt {
    width: 48px;
}

.edit-list {
    width: 100px;
    margin-left: 15px;
}

.ico-sum {
    width: 17px;
    height: 18px;
    margin-right: 8px;
}

.b-sort {
    width: 45px;
}

.b-find {
    width: 54px;
}

.ico-sort {
    width: 34px;
    height: 34px;
}

.az-a {
    fill: #3f8fd2;
    font-size: 17px;
}

.az-z {
    fill: #444;
    font-size: 17px;
}

.b-full {
    width: 100%;
}

.ico-addin {
    width: 32px;
    height: 32px;
}

.ico-analyze {
    width: 36px;
    height: 36px;
}

/* formula bar */
.formula {
    height: 26px;
    display: flex;
    gap: 9px;
    margin: 5px 0 9px 6px;
}

.formula > div {
    height: 26px;
    background: #fff;
}

.name-box {
    width: 137px;
    display: flex;
    align-items: center;
    justify-content: space-between;
    padding: 0 4px 0 5px;
    font-size: 12.500px;
}

.fx-box {
    width: 99px;
    display: flex;
    align-items: center;
    gap: 18px;
    padding-left: 10px;
}

.fx-mark {
    width: 14px;
    height: 14px;
}

.fx {
    font-family: "Liberation Serif", serif;
    font-style: italic;
    font-size: 16px;
    color: #444;
}

.fx-input {
    flex: 1;
    margin-left: -5px;
}

/* sheet */
.sheet {
    table-layout: fixed;
    width: 2120px;
    border-collapse: separate;
    border-spacing: 0;
    background: #fff;
    font-family: Lato, sans-serif;
    font-size: 26px;
    letter-spacing: .7px;
    color: #111;
}

.c-rh {
    width: 41px;
}

.c-b {
    width: 30px;
}

.c-c {
    width: 208px;
}

.c-d {
    width: 128px;
}

.c-e {
    width: 70px;
}

.c-f {
    width: 153px;
}

.c-g {
    width: 122px;
}

.c-h {
    width: 126px;
}

.c-i {
    width: 145px;
}

.c-j {
    width: 103px;
}

.c-k {
    width: 154px;
}

.c-l {
    width: 138px;
}

.c-m {
    width: 144px;
}

.c-n {
    width: 181px;
}

.c-o {
    width: 122px;
}

.c-p {
    width: 255px;
}

.cols {
    height: 21px;
}

.cols th {
    padding: 2px 0 0 2px;
    background: #f5f5f5;
    border-right: 1px solid #dcdcdc;
    border-bottom: 2px solid #b5b5b5;
    font-family: "Open Sans", sans-serif;
    font-size: 13px;
    font-weight: 400;
    letter-spacing: 0;
    color: #666;
}

.cols .col-on {
    background: #cce8d8;
    color: #1b5e3a;
    border-right: 0;
    border-bottom-color: #217346;
}

.cols .corner {
    position: relative;
}

.corner-tri {
    position: absolute;
    right: 4px;
    bottom: 3px;
    border-left: 12px solid transparent;
    border-bottom: 12px solid #bdbdbd;
}

.h53 {
    height: 53px;
}

.h54 {
    height: 54px;
}

.h55 {
    height: 55px;
}

.h58 {
    height: 58px;
}

.h59 {
    height: 59px;
}

.h60 {
    height: 60px;
}

.h61 {
    height: 61px;
}

.sheet td {
    position: relative;
    padding: 0 5px 3px;
    vertical-align: bottom;
    white-space: nowrap;
    overflow: hidden;
    border-right: 1px solid #d6d6d6;
    border-bottom: 1px solid #d6d6d6;
}

.sheet .low td {
    padding-bottom: 2px;
}

.sheet .rh {
    padding: 0 1px 0 0;
    background: #f5f5f5;
    border-right: 2px solid #cfcfcf;
    border-bottom: 1px solid #dcdcdc;
    font-family: "Open Sans", sans-serif;
    font-size: 13px;
    font-weight: 400;
    letter-spacing: 0;
    color: #666;
}

.sheet .row-on {
    background: #cce8d8;
    color: #1b5e3a;
    border-right-color: #217346;
}

.strong td {
    -webkit-text-stroke: .5px #111;
}

.sheet .r {
    text-align: right;
    letter-spacing: 0;
}

.sheet .tk {
    letter-spacing: 0;
    font-size: 25px;
}

.sheet .indent {
    padding-left: 19px;
}

.sheet .cut {
    padding-left: 3px;
}

.sheet .clip,
.sheet .low .clip {
    direction: rtl;
    padding: 0 0 3px;
}

.clip span {
    display: inline-block;
    direction: ltr;
}

.acct {
    display: flex;
    justify-content: space-between;
    padding: 0 6px 0 7px;
    letter-spacing: 0;
}

.yellow td {
    background: #ffff33;
    border-color: #ffff33;
}

.sheet .amber {
    background: #fbb829;
    border-color: #fbb829;
}

.fill td {
    background: #fbb829;
    border-color: #fbb829;
}

.sheet .white {
    background: #fff;
    border-right-color: #fff;
    border-bottom-color: #d6d6d6;
}

.sheet .line-under {
    border-bottom: 1px solid #111;
}

.sheet .total {
    border-bottom: 4px double #111;
    padding-bottom: 2px;
}

.sheet .risk {
    font-size: 31px;
    letter-spacing: 0;
}

.fill .err {
    font-family: "Liberation Serif", serif;
    font-size: 29px;
    letter-spacing: 0;
    text-align: center;
    padding: 0 0 1px;
}

.fill .note::before {
    content: "";
    position: absolute;
    left: 0;
    top: 0;
    border-top: 11px solid #2e7d1e;
    border-right: 6px solid transparent;
}

.fill .selected {
    box-shadow: inset 0 0 0 1px #2d7a3c, inset 0 0 0 3px #fff8dc;
}

.paste-tag {
    position: absolute;
    left: 1899px;
    bottom: 1px;
    width: 12px;
    height: 12px;
}

.pointer {
    position: absolute;
    left: 1168px;
    top: 416px;
    width: 14px;
    height: 24px;
}
```
